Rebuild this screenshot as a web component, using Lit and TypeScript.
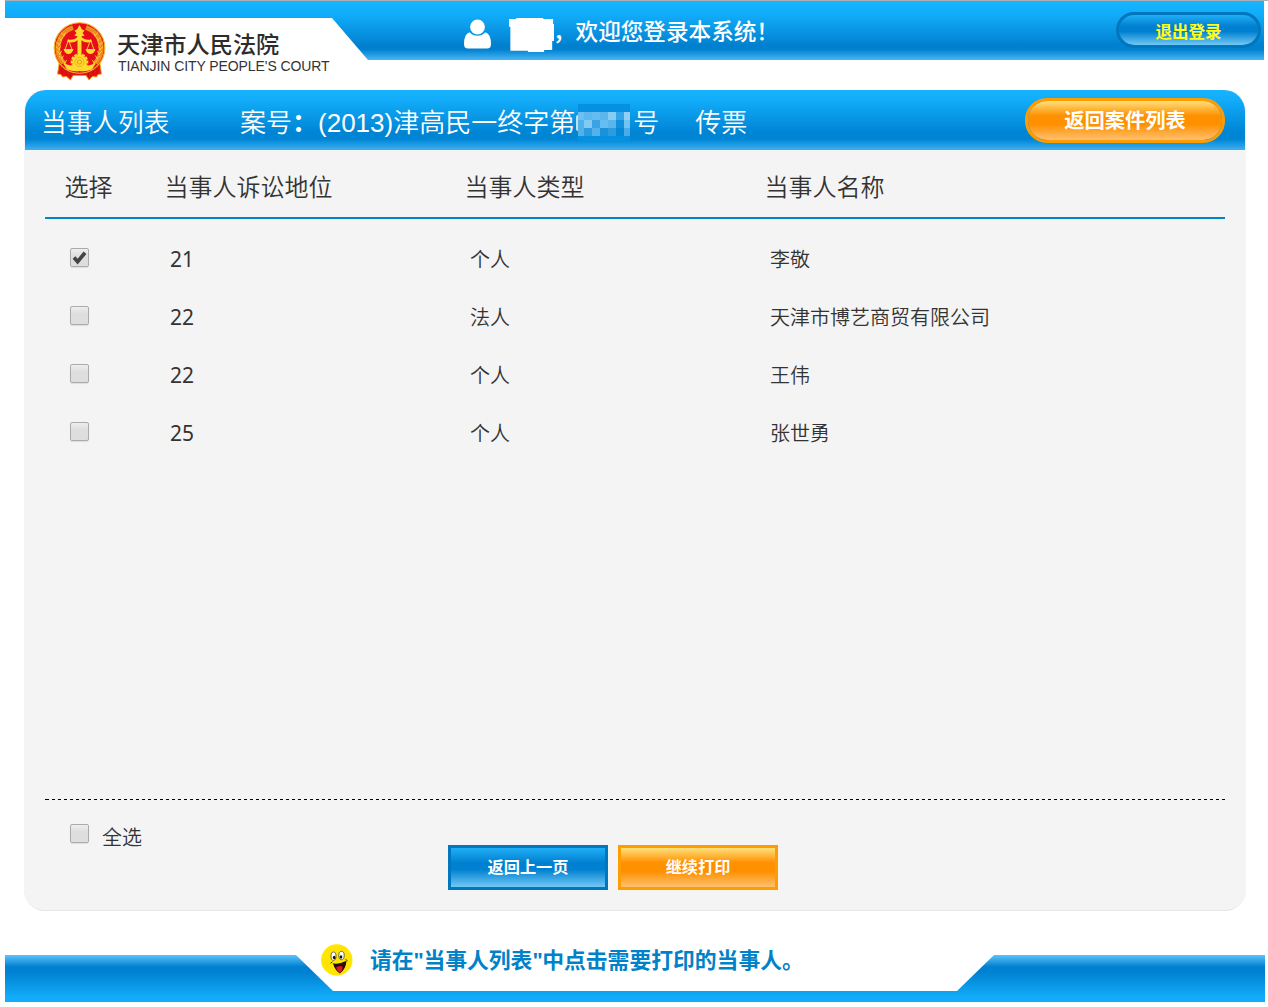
import { LitElement, html, css, svg } from "lit";
import { customElement, state } from "lit/decorators.js";

interface Party {
  status: string;
  kind: string;
  name: string;
  checked: boolean;
}

const MASK_TONES = [
  "#6cc0f0", "#5cb8ee", "#66bcf0", "#5cb6ec", "#86cdf4", "#35a5ea", "#90d0f5",
  "#4fb2ec", "#80caf4", "#3aa3e6", "#66bdf0", "#5ab5ec", "#1190dc", "#72c3f1",
  "#55b0e8", "#2c9bdf", "#55b1e9", "#1a92da", "#2c9cdf", "#0489d8", "#4aabe5",
];

const leaves = [0, 1, 2, 3, 4, 5, 6];

@customElement("court-emblem")
export class CourtEmblem extends LitElement {
  static styles = css`
    :host { display: block; width: 53px; height: 59px; }
    svg { display: block; }
  `;

  render() {
    const teeth = Array.from({ length: 12 }, (_, i) => i * 30);
    return html`
      <svg width="53" height="59" viewBox="0 0 53 59">
        <path d="M7 36 L4.500 52 L8 52.500 L9.500 55 L13.500 54.500 L17.500 58 L20 53.500 L33 53.500 L36 58 L39.500 54.500 L43.500 55 L45 52.500 L48.500 52 L46 36 Z" fill="#e60e18" stroke="#f3a21c" stroke-width="0.900"/>
        <path d="M9 46v6M13 47v6M17.500 50v5M44 46v6M40 47v6M35.500 50v5" stroke="#b80d12" stroke-width="0.700"/>
        <circle cx="26.500" cy="26" r="25.300" fill="#e60e18" stroke="#f2b52a" stroke-width="1.100"/>
        <path d="M20 5.500 A22 22 0 0 0 10.500 41" fill="none" stroke="#f08a1d" stroke-width="5"/>
        <path d="M33 5.500 A22 22 0 0 1 42.500 41" fill="none" stroke="#f08a1d" stroke-width="5"/>
        ${leaves.map((i) => {
          const y = 12 + i * 4.6;
          const x = [10, 7, 5.4, 5, 6, 8, 11][i];
          return svg`
            <path d="M${x - 2} ${y - 1} l4 3 M${x + 2.6} ${y - 1.4} l-2.400 4" stroke="#ffc838" stroke-width="1"/>
            <path d="M${55 - x} ${y - 1} l-4 3 M${50.4 - x} ${y - 1.4} l2.400 4" stroke="#ffc838" stroke-width="1"/>`;
        })}
        <path d="M26.500 3 L29 7.500 L31.500 8.500 L29.500 11 L31.500 13.500 L28.500 14.500 L28.500 34 H24.500 L24.500 14.500 L21.500 13.500 L23.500 11 L21.500 8.500 L24 7.500 Z" fill="#ffd92e"/>
        <path d="M14.500 18.500 Q20 20.500 25 16.500 H28 Q33 20.500 38.500 18.500" fill="none" stroke="#ffd92e" stroke-width="2.800"/>
        <path d="M15.500 18 L11.500 29 M15.500 18 L19.500 29 M37.500 18 L33.500 29 M37.500 18 L41.500 29" stroke="#ffd92e" stroke-width="0.900"/>
        <path d="M10.500 27 H20.500 Q19 32 15.500 32 Q12 32 10.500 27 Z M32.500 27 H42.500 Q41 32 37.500 32 Q34 32 32.500 27 Z" fill="#ffd92e"/>
        <path d="M10 41 Q17 44.500 26.500 44 Q36 44.500 43 41 L39 47.500 Q33 50 26.500 49 Q20 50 14 47.500 Z" fill="#ffd92e"/>
        <g fill="#ffd92e">
          ${teeth.map((a) => svg`<rect x="25" y="31.200" width="3" height="4" transform="rotate(${a} 26.500 40)"/>`)}
          <circle cx="26.500" cy="40" r="7.200"/>
        </g>
        <circle cx="26.500" cy="40" r="4.600" fill="none" stroke="#eeb022" stroke-width="1"/>
        <circle cx="26.500" cy="40" r="2.100" fill="none" stroke="#d9901c" stroke-width="0.900"/>
      </svg>
    `;
  }
}

@customElement("party-check")
export class PartyCheck extends LitElement {
  static properties = { checked: { type: Boolean } };
  declare checked: boolean;

  static styles = css`
    :host { display: block; width: 19px; height: 19px; }
    .box {
      box-sizing: border-box; width: 19px; height: 19px;
      border: 1px solid #ababab; border-radius: 2px;
      background: linear-gradient(#eeeeee, #dedede 40%, #dedede);
      box-shadow: 0 1px 1px #dddddd;
    }
    svg { display: block; }
  `;

  render() {
    return html`<div class="box" role="checkbox" aria-checked=${this.checked ? "true" : "false"}>
      ${this.checked
        ? html`<svg width="17" height="17" viewBox="0 0 17 17">
            <path d="M3 8.600 L6.600 12.600 L14 3.800" fill="none" stroke="#444" stroke-width="3.700"/>
          </svg>`
        : ""}
    </div>`;
  }
}

@customElement("app-root")
export class AppRoot extends LitElement {
  @state() private parties: Party[] = [
    { status: "21", kind: "个人", name: "李敬", checked: true },
    { status: "22", kind: "法人", name: "天津市博艺商贸有限公司", checked: false },
    { status: "22", kind: "个人", name: "王伟", checked: false },
    { status: "25", kind: "个人", name: "张世勇", checked: false },
  ];

  static styles = css`
    :host {
      display: flex; flex-direction: column; box-sizing: border-box;
      width: 1268px; height: 1007px; overflow: hidden; background: #fff;
      font-family: "Liberation Sans", "Noto Sans CJK SC", sans-serif;
      color: #333; white-space: nowrap;
    }
    .topline { height: 1px; margin-left: 5px; background: #a9b0b5; flex: none; }
    .top {
      display: flex; flex: none; height: 59px; margin: 0 4px 0 5px;
      background: linear-gradient(#17b4ff, #12adfa 22%, #0080cf 76%, #0080cf 82%, #4ab6f4);
    }
    .brand {
      display: flex; box-sizing: border-box; width: 363px; height: 65px; margin-top: 17px;
      padding: 4px 0 0 48px; flex: none;
      background: #fff;
      clip-path: polygon(0 0, 327px 0, 363px 42px, 363px 65px, 0 65px);
    }
    .names { margin-left: 11px; padding-top: 10px; }
    .cn { font-size: 23.200px; line-height: 26px; font-weight: 500; color: #2d2d2d; }
    .en { font-size: 14px; line-height: 16px; letter-spacing: -0.080px; margin: 0 0 0 1px; color: #333; }
    .user { display: flex; margin-left: 96px; color: #fff; }
    .person { margin: 18px 0 0; display: block; }
    .redacted {
      width: 45px; height: 34px; margin: 17px 0 0 17px; background: #fff;
      clip-path: polygon(0 3%, 16% 3%, 16% 0, 76% 0, 76% 3%, 98% 3%, 98% 18%, 100% 18%, 100% 68%, 96% 68%, 96% 94%, 78% 94%, 78% 100%, 42% 100%, 42% 96%, 3% 96%, 3% 26%, 0 26%);
    }
    .hello { font-size: 22.600px; font-weight: 500; line-height: 32px; margin-top: 16px; margin-left: -1px; }
    .btn {
      display: flex; align-items: center; justify-content: center; box-sizing: border-box;
      font-weight: 600; color: #fff; flex: none;
    }
    .blue { border: 3px solid #0076be; background: linear-gradient(#20aef6, #0080d0 38%, #0080d0 55%, #72c8f6) padding-box; }
    .orange { border: 3px solid #ff9c00; background: linear-gradient(#ffe07c, #ff9000 38%, #ff9000 60%, #ffc070) padding-box; }
    .logout {
      width: 145px; height: 36px; margin: 11px 3px 0 auto; border-radius: 18px;
      font-size: 16.500px; color: #ffff1a; padding-top: 2px;
    }
    .back { width: 200px; height: 45px; border-radius: 22px; margin: 8px 20px 0 auto; font-size: 20.300px; padding-top: 1px; }
    .card {
      display: flex; flex-direction: column; box-sizing: border-box; flex: none;
      height: 821px; margin: 30px 22px 0 24px; background: #f4f4f4;
      border-radius: 21px; border-bottom: 1px solid #e5e5e5; padding: 0 1px;
    }
    .title {
      display: flex; height: 60px; flex: none; color: #fff;
      font-size: 26px; font-weight: 350; line-height: 40px;
      border-radius: 21px 21px 0 0;
      background: linear-gradient(#17b4ff, #12adfa 15%, #0085d5 70%, #0085d5 82%, #3eb0f2);
    }
    .title span { margin-top: 13px; }
    .list-name { width: 199px; padding-left: 16px; font-size: 25.700px; }
    .num { font-weight: 400; }
    .colon { font-weight: 700; }
    .mask {
      display: grid; grid-template-columns: 6px repeat(5, 8px) 6px; grid-auto-rows: 8px;
      margin: 14px 3px 8px 0; padding: 8px 0 6px; background: #0690e1;
    }
    .digit {
      width: 2px; height: 16px; margin: 25px 0 0 1px; box-sizing: border-box;
      border-left: 2px solid #bfe5fb; border-radius: 4px 0 0 4px;
    }
    .kind { padding-left: 36px; }
    .grid { display: grid; grid-template-columns: 100px 300px 300px 1fr; }
    .head {
      height: 67px; flex: none; margin: 0 20px; padding-left: 20px;
      border-bottom: 2px solid #0088c6; font-size: 24px; font-weight: 350; line-height: 36px;
    }
    .head span { margin: 20px 0 0 -0.500px; }
    .rows { margin: 10px 20px 0; padding-left: 25px; flex: 1; }
    .row { height: 58px; align-items: center; font-size: 20px; font-weight: 350; }
    .row party-check { margin-top: -2px; }
    .status { font-family: "Noto Sans", sans-serif; font-size: 21px; font-weight: 400; padding-top: 1px; }
    .dash {
      flex: none; height: 1px; margin: 0 20px;
      background: linear-gradient(#000, #000) 0 0 / 1px 1px no-repeat,
        repeating-linear-gradient(90deg, transparent 0 1px, #000 1px 4px, transparent 4px 6px);
    }
    .bottom { display: flex; flex: none; height: 110px; padding-left: 45px; }
    .all { display: flex; width: 378px; padding-top: 24px; font-size: 20px; font-weight: 350; line-height: 26px; }
    .all span { margin-left: 13px; padding-top: 1px; }
    .actions { display: flex; gap: 10px; padding-top: 45px; }
    .actions .btn { width: 160px; height: 45px; font-size: 16.200px; padding-bottom: 3px; }
    .foot {
      display: flex; flex: none; height: 47px; margin: 44px 3px 0 5px;
      background: linear-gradient(#5cc4fc, #0080d0 25%, #0080d0 36%, #12adfa 90%, #12adfa);
    }
    .tip {
      display: flex; box-sizing: border-box; width: 698px; height: 48px; margin: -12px 0 0 291px; padding-left: 25px;
      background: #fff; color: #0082c8; font-size: 21.800px; font-weight: 700; line-height: 32px;
      clip-path: polygon(0 0, 698px 0, 698px 12px, 661px 48px, 37px 48px, 0 12px);
    }
    .tip span { margin: 1px 0 0 17px; }
    .tip i { font-style: normal; font-family: "Open Sans", sans-serif; letter-spacing: -0.500px; }
  `;

  render() {
    return html`
      <div class="topline"></div>
      <header class="top">
        <div class="brand">
          <court-emblem></court-emblem>
          <div class="names">
            <div class="cn">天津市人民法院</div>
            <div class="en">TIANJIN CITY PEOPLE'S COURT</div>
          </div>
        </div>
        <div class="user">
          <svg class="person" width="28" height="30" viewBox="0 0 28 30" fill="#fff">
            <ellipse cx="13.500" cy="8" rx="7.400" ry="7.400"/>
            <path d="M5.500 13.200 Q9 16.800 13.500 16.800 Q18 16.800 21.500 13.200 Q27 15 27 25 Q27 29.500 23 29.500 H4 Q0 29.500 0 25 Q0 15 5.500 13.200 Z"/>
          </svg>
          <div class="redacted"></div>
          <div class="hello">，欢迎您登录本系统！</div>
        </div>
        <div class="btn blue logout">退出登录</div>
      </header>
      <main class="card">
        <div class="title">
          <span class="list-name">当事人列表</span>
          <span>案号<b class="colon">：</b><b class="num">(2013)</b>津高民一终字第</span>
          <div class="digit"></div>
          <div class="mask">
            ${MASK_TONES.map((c) => html`<div style="background:${c}"></div>`)}
          </div>
          <span>号</span>
          <span class="kind">传票</span>
          <div class="btn orange back">返回案件列表</div>
        </div>
        <div class="grid head">
          <span>选择</span><span>当事人诉讼地位</span><span>当事人类型</span><span>当事人名称</span>
        </div>
        <div class="rows">
          ${this.parties.map(
            (p) => html`<div class="grid row">
              <party-check .checked=${p.checked}></party-check>
              <span class="status">${p.status}</span>
              <span>${p.kind}</span>
              <span>${p.name}</span>
            </div>`
          )}
        </div>
        <div class="dash"></div>
        <div class="bottom">
          <div class="all"><party-check></party-check><span>全选</span></div>
          <div class="actions">
            <div class="btn blue">返回上一页</div>
            <div class="btn orange">继续打印</div>
          </div>
        </div>
      </main>
      <footer class="foot">
        <div class="tip">
          <svg width="32" height="33" viewBox="0 0 32 33">
            <circle cx="15.800" cy="17" r="15.700" fill="#ffe500"/>
            <ellipse cx="12.500" cy="13.200" rx="2.500" ry="4.200" fill="#fff" stroke="#444" stroke-width="0.800"/>
            <ellipse cx="20.500" cy="12.500" rx="2.700" ry="4.200" fill="#fff" stroke="#444" stroke-width="0.800"/>
            <ellipse cx="13.200" cy="14.600" rx="1.300" ry="1.800" fill="#111"/>
            <ellipse cx="20" cy="14" rx="1.300" ry="1.800" fill="#111"/>
            <path d="M10.500 20 Q17.500 22 25.500 17.800 Q25 26 19 30.500 Q14 27.500 12 20.500 Z" fill="#2a0d05"/>
            <path d="M15 24.500 Q18 22 21.500 23.500 Q21.500 28 19 30 Q16 28 15 24.500 Z" fill="#e0182a"/>
            <path d="M9.500 20.300 l2 -1.500 M24.500 16.500 l2 1.200" stroke="#333" stroke-width="1"/>
          </svg>
          <span>请在<i>"</i>当事人列表<i>"</i>中点击需要打印的当事人。</span>
        </div>
      </footer>
    `;
  }
}
